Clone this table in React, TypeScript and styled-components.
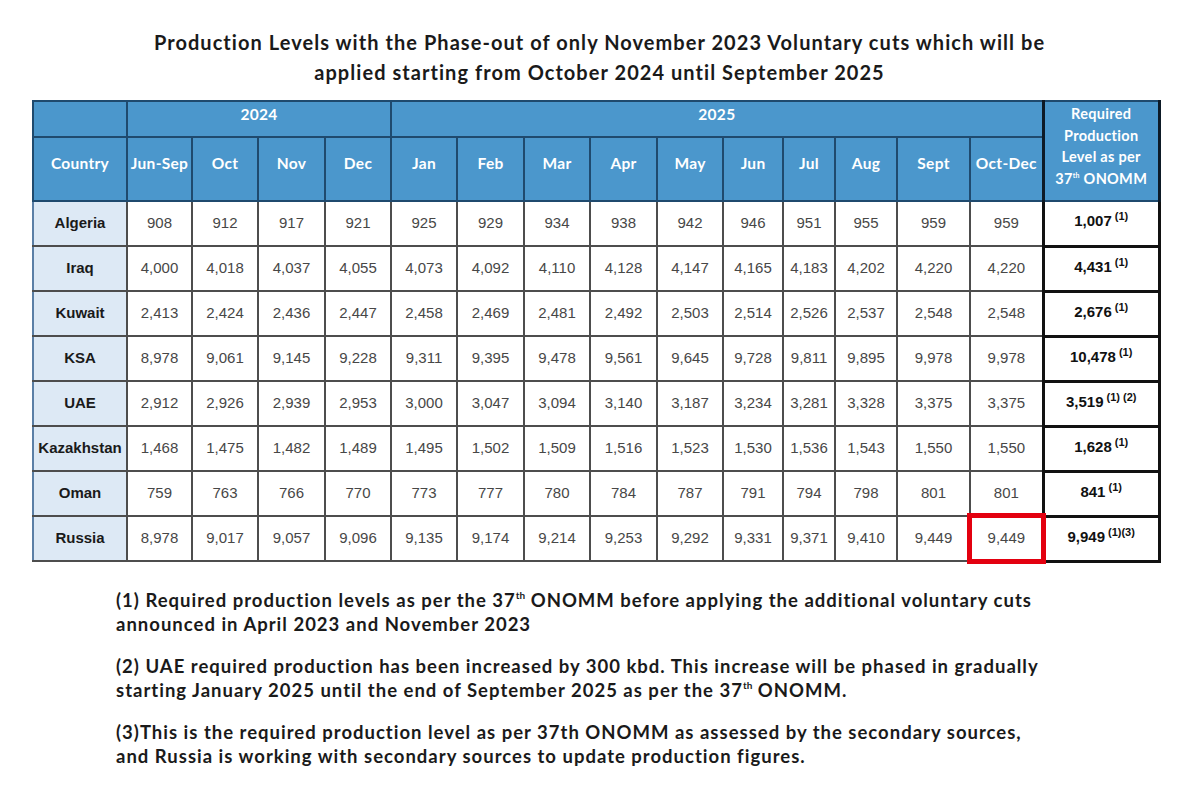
import React from 'react';
import styled, { createGlobalStyle } from 'styled-components';

const GlobalStyle = createGlobalStyle`
  html, body {
    margin: 0;
    padding: 0;
    background: #ffffff;
  }
`;

const Page = styled.main`
  width: 1199px;
  height: 808px;
  overflow: hidden;
  background: #ffffff;
  padding-top: 27px;
  box-sizing: border-box;
`;

const Title = styled.h1`
  margin: 0 0 13px;
  text-align: center;
  font-family: Lato, 'Open Sans', sans-serif;
  font-weight: 700;
  font-size: 20px;
  letter-spacing: 1.05px;
  line-height: 30px;
  color: #1a1a1a;
`;

const TableWrap = styled.div`
  padding-left: 32px;
`;

const Table = styled.table`
  width: 1126px;
  table-layout: fixed;
  border-collapse: collapse;
  font-family: 'Liberation Sans', Arial, sans-serif;
`;

const HeadCell = styled.th<{ $year?: boolean; $required?: boolean }>`
  background: #4b97cc;
  color: #ffffff;
  font-family: Lato, 'Open Sans', sans-serif;
  font-weight: 700;
  font-size: ${({ $required }) => ($required ? '14.5px' : '15.5px')};
  letter-spacing: 0.3px;
  line-height: ${({ $required }) => ($required ? '21.5px' : '18px')};
  text-align: center;
  vertical-align: ${({ $year, $required }) => ($year || $required ? 'top' : 'middle')};
  padding: ${({ $year, $required }) =>
    $required ? '1px 0 0' : $year ? '3px 0 0' : '0 0 12px'};
  border: 2px solid #1f4a6e;
  border-left-width: ${({ $required }) => ($required ? '3px' : '2px')};
  border-right-width: ${({ $required }) => ($required ? '3px' : '2px')};
  border-left-color: ${({ $required }) => ($required ? '#0d1a26' : '#1f4a6e')};
  border-right-color: ${({ $required }) => ($required ? '#0d1a26' : '#1f4a6e')};
  white-space: nowrap;
`;

const YearRow = styled.tr`
  height: 36px;
`;

const MonthRow = styled.tr`
  height: 64px;
`;

const DataRow = styled.tr`
  height: 45px;
`;

const CountryCell = styled.td`
  background: #dde9f5;
  color: #1a1a1a;
  font-weight: 700;
  font-size: 15px;
  text-align: center;
  padding: 0 0 2px;
  border: 2px solid #4d4d4d;
  border-left-color: #5b7fa6;
  white-space: nowrap;
`;

const ValueCell = styled.td<{ $flagged?: boolean }>`
  color: #474747;
  font-size: 15px;
  text-align: center;
  padding: 0 0 2px;
  border: 2px solid #4d4d4d;
  outline: ${({ $flagged }) => ($flagged ? '5px solid #e3000f' : 'none')};
  outline-offset: -2px;
`;

const RequiredCell = styled.td`
  color: #111111;
  font-weight: 700;
  font-size: 15px;
  text-align: center;
  vertical-align: top;
  padding: 10px 0 0;
  border: 2px solid #4d4d4d;
  border-left: 3px solid #111111;
  border-right: 3px solid #111111;
  border-bottom: 3px solid #111111;
  white-space: nowrap;
`;

const Note = styled.sup`
  font-size: 11px;
  margin-left: 3px;
  vertical-align: 6px;
  line-height: 0;
`;

const Th = styled.sup`
  font-size: 7px;
  vertical-align: 6px;
  line-height: 0;
`;

const Footnotes = styled.section`
  padding: 25px 0 0 116px;
  display: flex;
  flex-direction: column;
  gap: 18px;
`;

const Footnote = styled.p`
  margin: 0;
  font-family: Lato, 'Open Sans', sans-serif;
  font-weight: 700;
  font-size: 18.5px;
  letter-spacing: 1px;
  line-height: 24px;
  color: #1a1a1a;
`;

const FootSup = styled.sup`
  font-size: 10px;
  letter-spacing: 0;
  vertical-align: 8px;
  line-height: 0;
`;

const widths = [94, 65, 66, 67, 66, 66, 67, 66, 67, 66, 60, 52, 62, 73, 73, 116];

const months2024 = ['Jun-Sep', 'Oct', 'Nov', 'Dec'];
const months2025 = ['Jan', 'Feb', 'Mar', 'Apr', 'May', 'Jun', 'Jul', 'Aug', 'Sept', 'Oct-Dec'];

type Row = {
  country: string;
  values: string[];
  required: string;
  notes: string[];
};

const rows: Row[] = [
  {
    country: 'Algeria',
    values: ['908', '912', '917', '921', '925', '929', '934', '938', '942', '946', '951', '955', '959', '959'],
    required: '1,007',
    notes: ['(1)']
  },
  {
    country: 'Iraq',
    values: ['4,000', '4,018', '4,037', '4,055', '4,073', '4,092', '4,110', '4,128', '4,147', '4,165', '4,183', '4,202', '4,220', '4,220'],
    required: '4,431',
    notes: ['(1)']
  },
  {
    country: 'Kuwait',
    values: ['2,413', '2,424', '2,436', '2,447', '2,458', '2,469', '2,481', '2,492', '2,503', '2,514', '2,526', '2,537', '2,548', '2,548'],
    required: '2,676',
    notes: ['(1)']
  },
  {
    country: 'KSA',
    values: ['8,978', '9,061', '9,145', '9,228', '9,311', '9,395', '9,478', '9,561', '9,645', '9,728', '9,811', '9,895', '9,978', '9,978'],
    required: '10,478',
    notes: ['(1)']
  },
  {
    country: 'UAE',
    values: ['2,912', '2,926', '2,939', '2,953', '3,000', '3,047', '3,094', '3,140', '3,187', '3,234', '3,281', '3,328', '3,375', '3,375'],
    required: '3,519',
    notes: ['(1) (2)']
  },
  {
    country: 'Kazakhstan',
    values: ['1,468', '1,475', '1,482', '1,489', '1,495', '1,502', '1,509', '1,516', '1,523', '1,530', '1,536', '1,543', '1,550', '1,550'],
    required: '1,628',
    notes: ['(1)']
  },
  {
    country: 'Oman',
    values: ['759', '763', '766', '770', '773', '777', '780', '784', '787', '791', '794', '798', '801', '801'],
    required: '841',
    notes: ['(1)']
  },
  {
    country: 'Russia',
    values: ['8,978', '9,017', '9,057', '9,096', '9,135', '9,174', '9,214', '9,253', '9,292', '9,331', '9,371', '9,410', '9,449', '9,449'],
    required: '9,949',
    notes: ['(1)(3)']
  }
];

export default function App() {
  return (
    <>
      <GlobalStyle />
      <Page>
        <Title>
          Production Levels with the Phase-out of only November 2023 Voluntary cuts which will be
          <br />
          applied starting from October 2024 until September 2025
        </Title>
        <TableWrap>
          <Table>
            <colgroup>
              {widths.map((w, i) => (
                <col key={i} style={{ width: w }} />
              ))}
            </colgroup>
            <thead>
              <YearRow>
                <HeadCell $year />
                <HeadCell $year colSpan={4}>2024</HeadCell>
                <HeadCell $year colSpan={10}>2025</HeadCell>
                <HeadCell rowSpan={2} $required>
                  Required
                  <br />
                  Production
                  <br />
                  Level as per
                  <br />
                  37<Th>th</Th> ONOMM
                </HeadCell>
              </YearRow>
              <MonthRow>
                <HeadCell>Country</HeadCell>
                {months2024.concat(months2025).map((m) => (
                  <HeadCell key={m}>{m}</HeadCell>
                ))}
              </MonthRow>
            </thead>
            <tbody>
              {rows.map((row) => (
                <DataRow key={row.country}>
                  <CountryCell>{row.country}</CountryCell>
                  {row.values.map((v, i) => (
                    <ValueCell
                      key={i}
                      $flagged={row.country === 'Russia' && i === row.values.length - 1}
                    >
                      {v}
                    </ValueCell>
                  ))}
                  <RequiredCell>
                    {row.required}
                    {row.notes.map((n) => (
                      <Note key={n}>{n}</Note>
                    ))}
                  </RequiredCell>
                </DataRow>
              ))}
            </tbody>
          </Table>
        </TableWrap>
        <Footnotes>
          <Footnote>
            (1) Required production levels as per the 37<FootSup>th</FootSup> ONOMM before applying the
            additional voluntary cuts
            <br />
            announced in April 2023 and November 2023
          </Footnote>
          <Footnote>
            (2) UAE required production has been increased by 300 kbd. This increase will be phased in gradually
            <br />
            starting January 2025 until the end of September 2025 as per the 37<FootSup>th</FootSup> ONOMM.
          </Footnote>
          <Footnote>
            (3)This is the required production level as per 37th ONOMM as assessed by the secondary sources,
            <br />
            and Russia is working with secondary sources to update production figures.
          </Footnote>
        </Footnotes>
      </Page>
    </>
  );
}
